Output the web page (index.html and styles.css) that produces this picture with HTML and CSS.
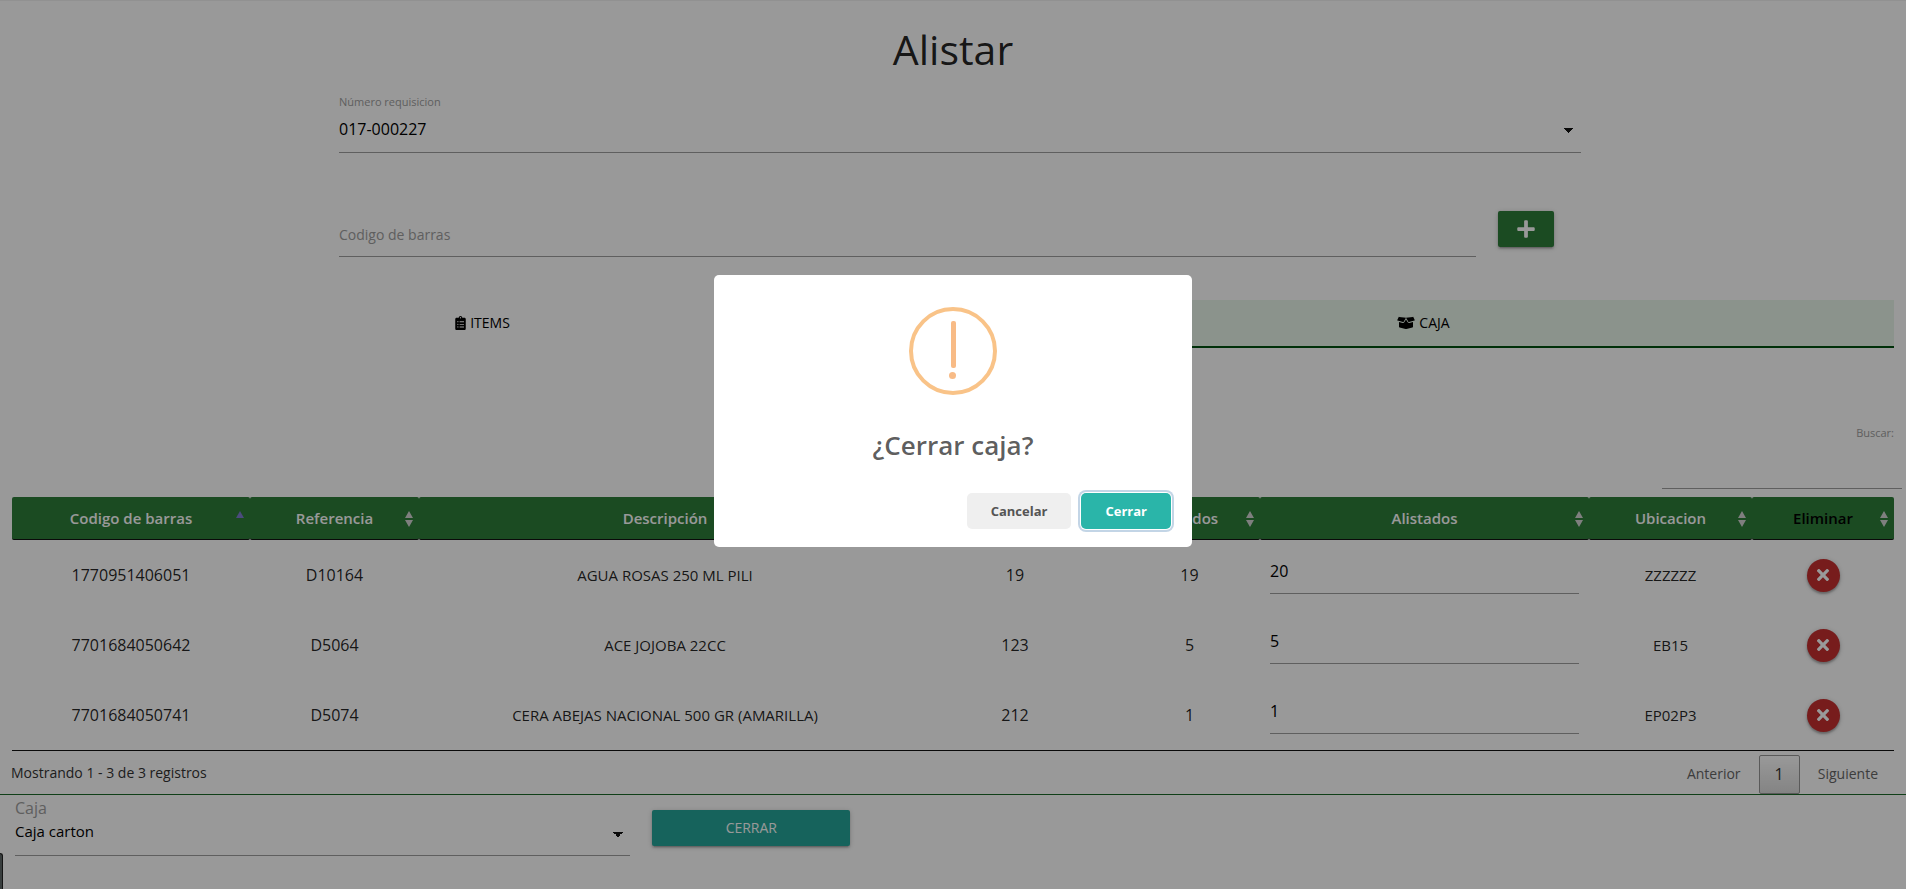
FILE: index.html
```html
<!DOCTYPE html>
<html lang="es">
<head>
<meta charset="utf-8">
<title>Alistar</title>
<link rel="stylesheet" href="styles.css">
</head>
<body>
<svg class="sprite" aria-hidden="true">
  <symbol id="times" viewBox="0 0 352 512"><path d="M242.700 256l100-100c12.300-12.300 12.300-32.200 0-44.500l-22.200-22.200c-12.300-12.300-32.200-12.300-44.500 0L176 189.300 76 89.300c-12.300-12.300-32.200-12.300-44.500 0L9.200 111.500c-12.300 12.300-12.300 32.200 0 44.500l100 100-100 100c-12.300 12.300-12.300 32.200 0 44.500l22.200 22.200c12.300 12.300 32.200 12.300 44.500 0l100-100 100 100c12.300 12.300 32.200 12.300 44.500 0l22.200-22.200c12.300-12.300 12.300-32.200 0-44.500z"/></symbol>
  <symbol id="sort" viewBox="0 0 10 16"><path d="M5 0l4 7H1zM5 16L1 9h8z"/></symbol>
</svg>
<main class="page">
  <h1 class="title">Alistar</h1>

  <section class="search-form">
    <div class="field">
      <label class="field-label" for="requisicion">Número requisicion</label>
      <select class="line-input numeric" id="requisicion"><option>017-000227</option></select>
    </div>
    <div class="barcode-row">
      <input class="line-input barcode" type="text" placeholder="Codigo de barras" aria-label="Codigo de barras">
      <button class="btn btn-add" type="button" aria-label="Agregar">
        <svg viewBox="0 0 448 512" width="18" height="20"><path d="M416 208H272V64c0-17.700-14.300-32-32-32h-32c-17.700 0-32 14.300-32 32v144H32c-17.700 0-32 14.300-32 32v32c0 17.700 14.300 32 32 32h144v144c0 17.700 14.300 32 32 32h32c17.700 0 32-14.300 32-32V304h144c17.700 0 32-14.300 32-32v-32c0-17.700-14.300-32-32-32z"/></svg>
      </button>
    </div>
  </section>

  <nav class="tabs">
    <a class="tab" href="#items">
      <svg viewBox="0 0 384 512" width="11" height="14"><path d="M336 64h-80c0-35.300-28.700-64-64-64s-64 28.700-64 64H48C21.500 64 0 85.500 0 112v352c0 26.500 21.500 48 48 48h288c26.500 0 48-21.500 48-48V112c0-26.500-21.500-48-48-48zM96 424c-13.300 0-24-10.700-24-24s10.700-24 24-24 24 10.700 24 24-10.700 24-24 24zm0-96c-13.300 0-24-10.700-24-24s10.700-24 24-24 24 10.700 24 24-10.700 24-24 24zm0-96c-13.300 0-24-10.700-24-24s10.700-24 24-24 24 10.700 24 24-10.700 24-24 24zm96-192c13.300 0 24 10.700 24 24s-10.700 24-24 24-24-10.700-24-24 10.700-24 24-24zm128 368c0 4.400-3.600 8-8 8H168c-4.400 0-8-3.600-8-8v-16c0-4.400 3.600-8 8-8h144c4.400 0 8 3.600 8 8v16zm0-96c0 4.400-3.600 8-8 8H168c-4.400 0-8-3.600-8-8v-16c0-4.400 3.600-8 8-8h144c4.400 0 8 3.600 8 8v16zm0-96c0 4.400-3.600 8-8 8H168c-4.400 0-8-3.600-8-8v-16c0-4.400 3.600-8 8-8h144c4.400 0 8 3.600 8 8v16z"/></svg>
      ITEMS</a>
    <a class="tab tab-active" href="#caja">
      <svg viewBox="0 0 640 512" width="18" height="14"><path d="M425.700 256c-16.900 0-32.800-9-41.400-23.400L320 126l-64.200 106.600c-8.700 14.500-24.600 23.500-41.500 23.500-4.500 0-9-.6-13.300-1.900L64 215v178c0 14.700 10 27.500 24.200 31l216.200 54.100c10.200 2.500 20.900 2.500 31 0L551.800 424c14.200-3.600 24.200-16.400 24.200-31V215l-137 39.100c-4.300 1.300-8.800 1.900-13.300 1.900zm212.600-112.200L586.800 41c-3.100-6.200-9.800-9.800-16.700-8.900L320 64l91.700 152.100c3.800 6.300 11.400 9.300 18.500 7.300l197.900-56.500c9.900-2.900 14.700-13.900 10.200-23.100zM53.200 41L1.700 143.800c-4.600 9.200.3 20.200 10.100 23l197.900 56.500c7.100 2 14.700-1 18.500-7.300L320 64 69.800 32.100c-6.900-.8-13.500 2.700-16.600 8.900z"/></svg>
      CAJA</a>
  </nav>

  <section class="grid">
    <div class="filter">
      <label class="field-label" for="buscar">Buscar:</label>
      <input class="line-input filter-input" id="buscar" type="search">
    </div>

    <table class="table">
      <colgroup><col class="c-code"><col class="c-ref"><col class="c-desc"><col class="c-sol"><col class="c-ali"><col class="c-input"><col class="c-ubi"><col class="c-del"></colgroup>
      <thead>
        <tr>
          <th class="asc">Codigo de barras<svg class="sort" viewBox="0 0 10 16"><path d="M5 0l4 7H1z"/></svg></th>
          <th>Referencia<svg class="sort"><use href="#sort"/></svg></th>
          <th>Descripción<svg class="sort"><use href="#sort"/></svg></th>
          <th><svg class="sort"><use href="#sort"/></svg></th>
          <th>Pedidos<svg class="sort"><use href="#sort"/></svg></th>
          <th>Alistados<svg class="sort"><use href="#sort"/></svg></th>
          <th>Ubicacion<svg class="sort"><use href="#sort"/></svg></th>
          <th><span class="dark">Eliminar</span><svg class="sort"><use href="#sort"/></svg></th>
        </tr>
      </thead>
      <tbody>
        <tr>
          <td class="numeric">1770951406051</td><td class="numeric">D10164</td><td>AGUA ROSAS 250 ML PILI</td><td class="numeric">19</td><td class="numeric">19</td>
          <td><input class="line-input cell-input numeric" type="text" value="20" aria-label="Alistados D10164"></td>
          <td>ZZZZZZ</td>
          <td><button class="btn-round" type="button" aria-label="Eliminar D10164"><svg width="12" height="18"><use href="#times"/></svg></button></td>
        </tr>
        <tr>
          <td class="numeric">7701684050642</td><td class="numeric">D5064</td><td>ACE JOJOBA 22CC</td><td class="numeric">123</td><td class="numeric">5</td>
          <td><input class="line-input cell-input numeric" type="text" value="5" aria-label="Alistados D5064"></td>
          <td>EB15</td>
          <td><button class="btn-round" type="button" aria-label="Eliminar D5064"><svg width="12" height="18"><use href="#times"/></svg></button></td>
        </tr>
        <tr>
          <td class="numeric">7701684050741</td><td class="numeric">D5074</td><td>CERA ABEJAS NACIONAL 500 GR (AMARILLA)</td><td class="numeric">212</td><td class="numeric">1</td>
          <td><input class="line-input cell-input numeric" type="text" value="1" aria-label="Alistados D5074"></td>
          <td>EP02P3</td>
          <td><button class="btn-round" type="button" aria-label="Eliminar D5074"><svg width="12" height="18"><use href="#times"/></svg></button></td>
        </tr>
      </tbody>
    </table>

    <div class="table-footer">
      <span class="summary">Mostrando 1 - 3 de 3 registros</span>
      <div class="pager">
        <a class="page-link" href="#prev">Anterior</a>
        <a class="page-link page-current" href="#p1">1</a>
        <a class="page-link" href="#next">Siguiente</a>
      </div>
    </div>
  </section>

  <section class="close-row">
    <div class="box-field">
      <label class="box-label" for="tipo">Caja</label>
      <select class="line-input" id="tipo"><option>Caja carton</option></select>
    </div>
    <button class="btn btn-close" type="button">CERRAR</button>
  </section>
  <div class="side-handle"></div>
</main>

<div class="overlay">
  <div class="modal" role="dialog" aria-modal="true" aria-labelledby="modal-title">
    <svg class="warning" viewBox="0 0 88 88" width="88" height="88">
      <circle cx="44" cy="44" r="42" fill="none" stroke="#f9c388" stroke-width="4"/>
      <rect x="42" y="14" width="5" height="47" rx="2" fill="#f8bb86"/>
      <circle cx="43.500" cy="68.500" r="3.500" fill="#f8bb86"/>
    </svg>
    <h2 class="modal-title" id="modal-title">¿Cerrar caja?</h2>
    <div class="modal-actions">
      <button class="modal-btn" type="button">Cancelar</button>
      <button class="modal-btn modal-confirm" type="button">Cerrar</button>
    </div>
  </div>
</div>
</body>
</html>
```
FILE: styles.css
```css
* { box-sizing: border-box; }

body {
  margin: 0;
  min-height: 100vh;
  background: #fff;
  color: rgba(0, 0, 0, 0.87);
  font: 15px/22px "Open Sans", "Noto Sans", sans-serif;
  overflow: hidden;
}

button, input, select { font: inherit; margin: 0; }
a { color: inherit; text-decoration: none; }
.sprite { position: absolute; width: 0; height: 0; }

.page { min-height: 100vh; border-top: 1px solid #f2f2f2; }

.title {
  margin: 0;
  padding-top: 25px;
  font-size: 41px;
  font-weight: 400;
  line-height: 46px;
  text-align: center;
}

.search-form {
  width: 66%;
  margin: 0 auto;
  padding: 22px 0 0 15px;
}

.field { display: flex; flex-direction: column; padding-right: 1px; }
.field-label { color: #9e9e9e; font-size: 11px; line-height: 16px; }

.line-input {
  width: 100%;
  height: 46px;
  padding: 0;
  border: 0;
  border-bottom: 1px solid #9e9e9e;
  border-radius: 0;
  outline: 0;
  background: transparent;
  color: #000;
  font-size: 15px;
}
.line-input::placeholder { color: #9e9e9e; opacity: 1; font-size: 14px; }
.numeric, .line-input.numeric { font-size: 16px; }

select.line-input {
  --arrow-top: 18px;
  appearance: none;
  height: 43px;
  padding-bottom: 4px;
  background:
    linear-gradient(to bottom left, #111 50%, transparent 50%) right 12px top var(--arrow-top) / 5px 5px no-repeat,
    linear-gradient(to bottom right, #111 50%, transparent 50%) right 7px top var(--arrow-top) / 5px 5px no-repeat;
}

.barcode-row {
  display: flex;
  align-items: flex-start;
  gap: 22px;
  padding: 58px 28px 0 0;
}
.barcode { flex: 1; }

.btn {
  height: 36px;
  border: 0;
  border-radius: 2px;
  box-shadow: 0 2px 2px rgba(0, 0, 0, 0.14), 0 3px 1px -2px rgba(0, 0, 0, 0.12), 0 1px 5px rgba(0, 0, 0, 0.2);
  color: #fff;
  font-size: 14px;
}
.btn svg, .btn-round svg { display: block; margin: auto; fill: currentColor; }
.btn-add { width: 56px; background: #2e7d3a; }

.tabs { display: flex; margin: 43px 12px 0; }
.tab {
  display: flex;
  flex: 1;
  align-items: center;
  justify-content: center;
  gap: 4px;
  height: 48px;
  border-bottom: 2px solid transparent;
  color: #000;
  font-size: 14px;
}
.tab svg { fill: currentColor; }
.tab-active { border-color: #00500f; background: #e8f5e9; }

.grid { border-bottom: 1px solid #1b6a28; }
.filter {
  display: flex;
  flex-direction: column;
  align-items: flex-end;
  padding: 77px 4px 8px 0;
}
.filter .field-label { padding-right: 8px; }
.filter-input { width: 240px; height: 48px; }

.table {
  width: calc(100% - 24px);
  margin: 0 12px;
  border-collapse: separate;
  border-spacing: 0;
  border-bottom: 1px solid #111;
  table-layout: fixed;
}
.c-code { width: 238px; }
.c-ref { width: 169px; }
.c-desc { width: 492px; }
.c-sol { width: 208px; }
.c-ali { width: 141px; }
.c-input { width: 329px; }
.c-ubi { width: 163px; }
.c-del { width: 142px; }

th {
  position: relative;
  height: 43px;
  padding: 0;
  border-bottom: 1px solid #111;
  border-radius: 2px;
  background: #2e7d3a;
  color: #fff;
  font-weight: 600;
  text-align: center;
}
.dark { color: #000; }
.sort {
  position: absolute;
  top: 14px;
  right: 5px;
  width: 10px;
  height: 16px;
  fill: #d4d4d4;
}
.asc .sort { fill: #7d7dd0; }

td { height: 70px; padding: 0 10px; text-align: center; }
.cell-input { display: block; height: 46px; margin-bottom: 8px; }

.btn-round {
  display: block;
  width: 33px;
  height: 33px;
  margin: auto;
  padding: 0;
  border: 0;
  border-radius: 50%;
  background: #c62f2f;
  box-shadow: 0 2px 2px rgba(0, 0, 0, 0.24), 0 1px 5px rgba(0, 0, 0, 0.2);
  color: #fff;
}

.table-footer {
  display: flex;
  align-items: flex-start;
  justify-content: space-between;
  padding: 4px 12px 0 11px;
  color: #333;
  font-size: 14px;
}
.summary { padding-top: 7px; }
.pager { display: flex; gap: 2px; }
.page-link {
  height: 39px;
  padding: 7px 15px;
  border: 1px solid transparent;
  border-radius: 2px;
  color: #666;
}
.page-current {
  border-color: #979797;
  background: linear-gradient(#fff, #dcdcdc);
  color: #333;
  font-size: 16px;
}

.close-row { display: flex; align-items: flex-start; gap: 22px; padding: 3px 15px 0; }
.box-field { display: flex; flex-direction: column; width: 32.8%; }
.box-label { color: #9e9e9e; font-size: 16px; line-height: 20px; }
.box-field select.line-input { --arrow-top: 14px; height: 38px; padding-bottom: 12px; }
.btn-close { width: 198px; margin-top: 12px; background: #26a69a; }

.side-handle {
  position: absolute;
  bottom: 0;
  left: 0;
  width: 3px;
  height: 36px;
  border: 1px solid #222;
  border-width: 1px 1px 0 0;
  border-radius: 0 6px 0 0;
  background: #5f6868;
}

.overlay {
  position: fixed;
  inset: 0;
  display: flex;
  align-items: center;
  justify-content: center;
  padding-bottom: 67px;
  background: rgba(0, 0, 0, 0.4);
}
.modal {
  width: 478px;
  padding-top: 32px;
  border-radius: 5px;
  background: #fff;
  text-align: center;
}
.warning { display: block; margin: 0 auto; }
.modal-title {
  margin: 0;
  padding: 32px 16px 0;
  color: rgba(0, 0, 0, 0.65);
  font-size: 26px;
  font-weight: 600;
  line-height: 36px;
}
.modal-actions { display: flex; justify-content: flex-end; gap: 10px; padding: 30px 21px 18px; }
.modal-btn {
  height: 36px;
  padding: 0 24px;
  border: 0;
  border-radius: 5px;
  background: #efefef;
  color: #555;
  font-size: 13px;
  font-weight: 700;
}
.modal-confirm {
  background: #2ab5a9;
  box-shadow: 0 0 0 1px #fff, 0 0 0 3px #c3d5e6;
  color: #fff;
}
```
